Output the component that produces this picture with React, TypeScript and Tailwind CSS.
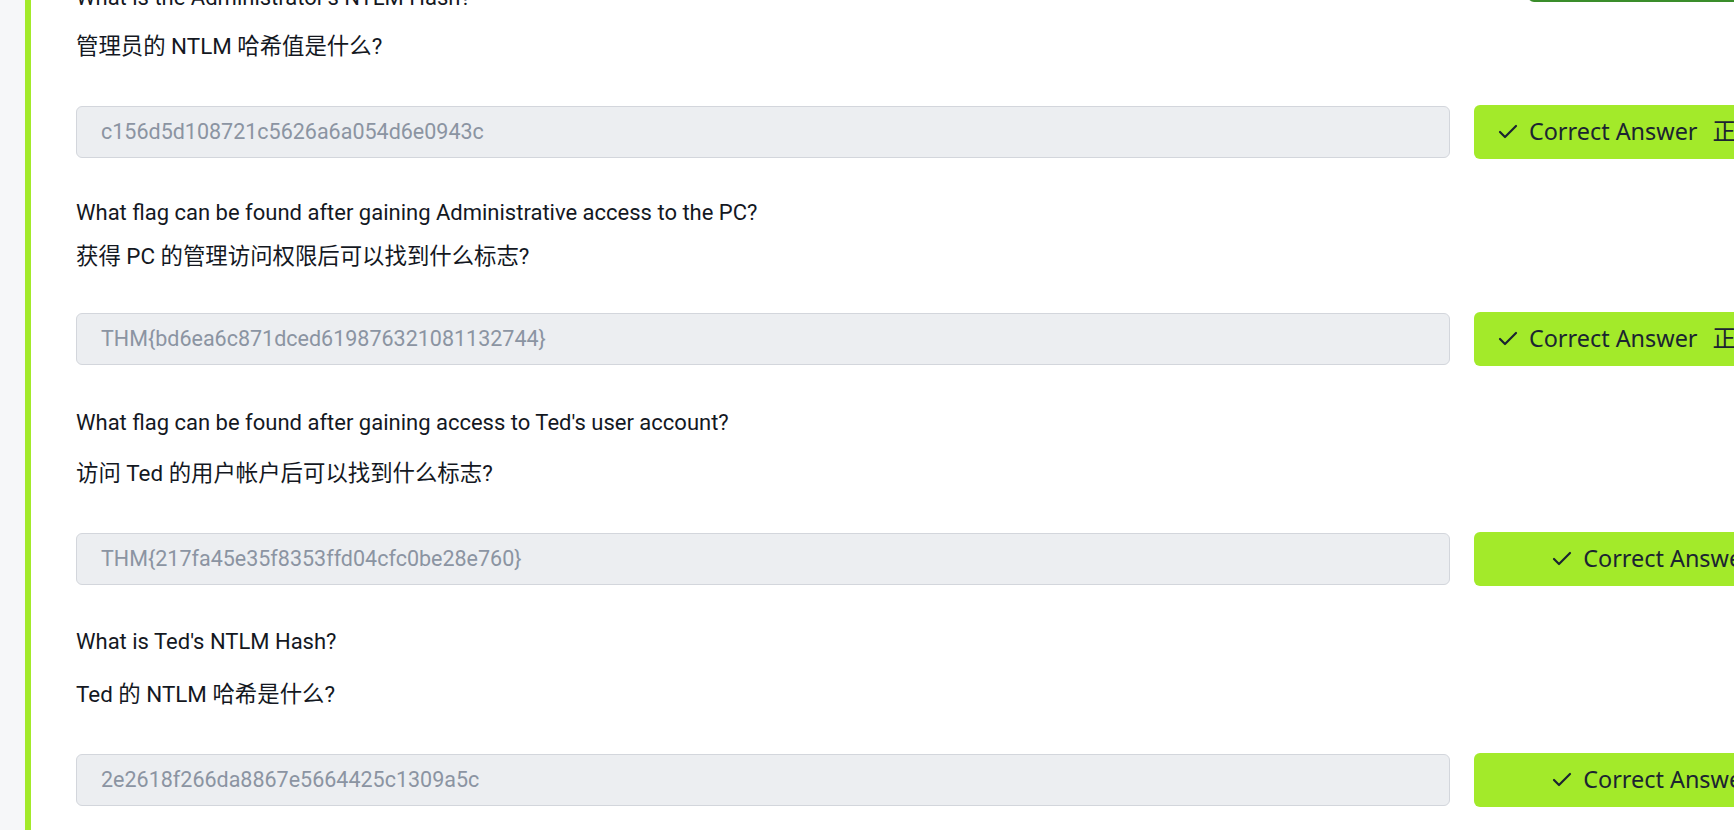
import { Check } from "lucide-react";

type Question = {
  en: string;
  zh: string;
  answer: string;
  translated: boolean;
  gaps: { top: string; mid: string; bottom: string };
};

const QUESTIONS: Question[] = [
  {
    en: "What is the Administrator's NTLM Hash?",
    zh: "管理员的 NTLM 哈希值是什么?",
    answer: "c156d5d108721c5626a6a054d6e0943c",
    translated: true,
    gaps: { top: "-mt-[16px]", mid: "mt-[19px]", bottom: "mt-[44px]" },
  },
  {
    en: "What flag can be found after gaining Administrative access to the PC?",
    zh: "获得 PC 的管理访问权限后可以找到什么标志?",
    answer: "THM{bd6ea6c871dced619876321081132744}",
    translated: true,
    gaps: { top: "mt-[40px]", mid: "mt-[14px]", bottom: "mt-[41px]" },
  },
  {
    en: "What flag can be found after gaining access to Ted's user account?",
    zh: "访问 Ted 的用户帐户后可以找到什么标志?",
    answer: "THM{217fa45e35f8353ffd04cfc0be28e760}",
    translated: false,
    gaps: { top: "mt-[43px]", mid: "mt-[21px]", bottom: "mt-[44px]" },
  },
  {
    en: "What is Ted's NTLM Hash?",
    zh: "Ted 的 NTLM 哈希是什么?",
    answer: "2e2618f266da8867e5664425c1309a5c",
    translated: false,
    gaps: { top: "mt-[42px]", mid: "mt-[23px]", bottom: "mt-[44px]" },
  },
];

export default function App() {
  return (
    <div className="flex h-[830px] w-[1734px] overflow-hidden bg-white font-['Roboto','Noto_Sans_CJK_SC',sans-serif]">
      <div className="w-[25px] shrink-0 bg-[#f6f7f9]" />
      <div className="w-[6px] shrink-0 bg-[#a3ea2a]" />
      <div className="flex shrink-0 flex-col pl-[45px]">
        {QUESTIONS.map((q, i) => (
          <QuestionBlock key={q.answer} q={q} first={i === 0} />
        ))}
      </div>
    </div>
  );
}

function QuestionBlock({ q, first }: { q: Question; first: boolean }) {
  return (
    <div className="flex flex-col">
      <div className={`flex h-[28px] items-end ${q.gaps.top}`}>
        <p className="text-[22px] leading-[28px] text-[#14181f]">{q.en}</p>
        {first && (
          <div className="mb-[10px] ml-auto h-[40px] w-[300px] rounded-[6px] border-2 border-[#3a8d2b]" />
        )}
      </div>
      <p className={`text-[22.4px] leading-[30px] text-[#14181f] ${q.gaps.mid}`}>{q.zh}</p>
      <div className={`flex items-center gap-[24px] ${q.gaps.bottom}`}>
        <div className="flex h-[52px] w-[1374px] items-center rounded-[6px] border border-[#d3d6dc] bg-[#eceef1] pl-[24px] text-[21.5px] text-[#8b94a2]">
          {q.answer}
        </div>
        <button className="flex h-[54px] w-[354px] shrink-0 items-center justify-center gap-[9px] rounded-[6px] bg-[#a3ea2a] font-['Noto_Sans','Noto_Sans_CJK_SC',sans-serif] text-[23.4px] text-[#1b2431]">
          <Check size={24} strokeWidth={2.2} />
          <span>Correct Answer</span>
          {q.translated && <span className="ml-[6px]">正确答案</span>}
        </button>
      </div>
    </div>
  );
}
